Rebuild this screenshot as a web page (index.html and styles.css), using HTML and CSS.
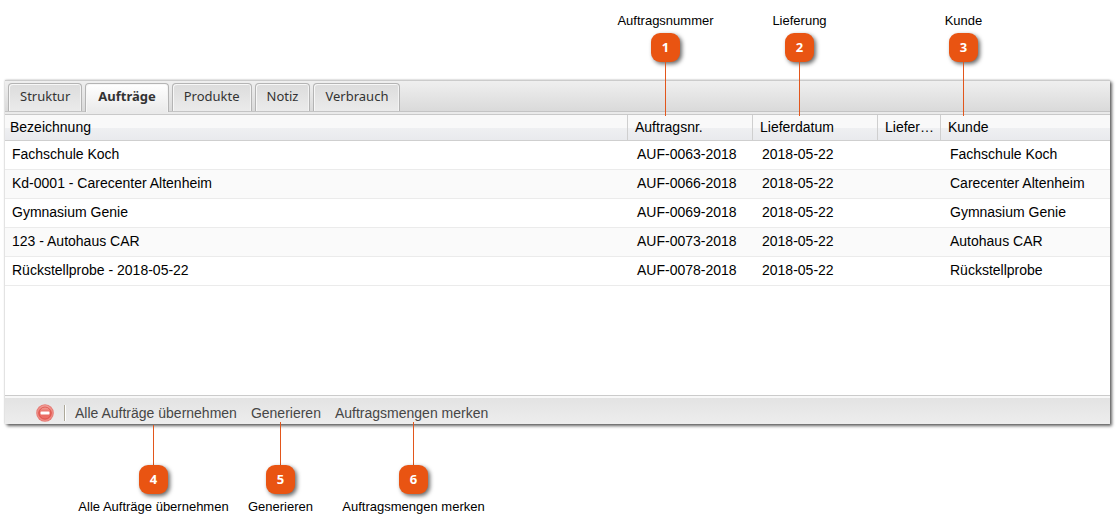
FILE: index.html
```html
<!DOCTYPE html>
<html lang="de">
<head>
<meta charset="utf-8">
<title>Aufträge</title>
<link rel="stylesheet" href="styles.css">
</head>
<body>
<main class="figure">
  <section class="panel">
    <div class="tabs" role="tablist">
      <button class="tab" role="tab" type="button">Struktur</button>
      <button class="tab tab-active" role="tab" type="button" aria-selected="true">Aufträge</button>
      <button class="tab" role="tab" type="button">Produkte</button>
      <button class="tab" role="tab" type="button">Notiz</button>
      <button class="tab" role="tab" type="button">Verbrauch</button>
    </div>
    <div class="grid">
      <table class="orders">
        <colgroup>
          <col>
          <col class="col-date">
          <col class="col-date">
          <col class="col-short">
          <col class="col-customer">
        </colgroup>
        <thead>
          <tr><th>Bezeichnung</th><th>Auftragsnr.</th><th>Lieferdatum</th><th>Liefer…</th><th>Kunde</th></tr>
        </thead>
        <tbody>
          <tr><td>Fachschule Koch</td><td>AUF-0063-2018</td><td>2018-05-22</td><td></td><td>Fachschule Koch</td></tr>
          <tr><td>Kd-0001 - Carecenter Altenheim</td><td>AUF-0066-2018</td><td>2018-05-22</td><td></td><td>Carecenter Altenheim</td></tr>
          <tr><td>Gymnasium Genie</td><td>AUF-0069-2018</td><td>2018-05-22</td><td></td><td>Gymnasium Genie</td></tr>
          <tr><td>123 - Autohaus CAR</td><td>AUF-0073-2018</td><td>2018-05-22</td><td></td><td>Autohaus CAR</td></tr>
          <tr><td>Rückstellprobe - 2018-05-22</td><td>AUF-0078-2018</td><td>2018-05-22</td><td></td><td>Rückstellprobe</td></tr>
        </tbody>
      </table>
    </div>
    <div class="toolbar">
      <button class="tool tool-remove" type="button" aria-label="Entfernen">
        <svg width="18" height="18" viewBox="0 0 18 18" aria-hidden="true">
          <defs>
            <linearGradient id="red" x1="0" y1="0" x2="0" y2="1">
              <stop offset="0" stop-color="#f6b0aa"/>
              <stop offset=".45" stop-color="#e8695f"/>
              <stop offset="1" stop-color="#f0706a"/>
            </linearGradient>
          </defs>
          <circle cx="9" cy="9" r="8.8" fill="#e77b75"/>
          <circle cx="9" cy="9" r="7.4" fill="url(#red)" stroke="#ee9791" stroke-width=".8"/>
          <circle cx="9" cy="9" r="6" fill="none" stroke="#dc554d" stroke-width=".9"/>
          <rect x="4.5" y="7.4" width="9" height="3" rx=".6" fill="#fff"/>
        </svg>
      </button>
      <span class="separator"></span>
      <button class="tool" type="button">Alle Aufträge übernehmen</button>
      <button class="tool" type="button">Generieren</button>
      <button class="tool" type="button">Auftragsmengen merken</button>
    </div>
  </section>

  <div class="callout callout-top at-number"><span class="label">Auftragsnummer</span><span class="badge">1</span><span class="line"></span></div>
  <div class="callout callout-top at-delivery"><span class="label">Lieferung</span><span class="badge">2</span><span class="line"></span></div>
  <div class="callout callout-top at-customer"><span class="label">Kunde</span><span class="badge">3</span><span class="line"></span></div>
  <div class="callout callout-bottom at-apply"><span class="line"></span><span class="badge">4</span><span class="label">Alle Aufträge übernehmen</span></div>
  <div class="callout callout-bottom at-generate"><span class="line"></span><span class="badge">5</span><span class="label">Generieren</span></div>
  <div class="callout callout-bottom at-remember"><span class="line"></span><span class="badge">6</span><span class="label">Auftragsmengen merken</span></div>
</main>
</body>
</html>
```

FILE: styles.css
```css
* {
  box-sizing: border-box;
}

body {
  margin: 0;
  background: #fff;
  color: #000;
  font: 14px/18px "Liberation Sans", Arial, sans-serif;
}

button {
  font: inherit;
  cursor: pointer;
}

.figure {
  position: relative;
  padding: 80px 9px 106px 5px;
}

.panel {
  background: #fff;
  box-shadow: 2px 2px 3px rgba(0, 0, 0, .6), 0 0 2px rgba(0, 0, 0, .25);
}

/* Tabs */
.tabs {
  display: flex;
  gap: 3px;
  height: 35px;
  padding: 2px 3px 0;
  border-top: 1px solid #cbcbcb;
  border-bottom: 1px solid #c9c9c9;
  background: linear-gradient(#efefef, #dadada 30px, #c4c4c4 30px, #c4c4c4 31px, #eaeaea 31px);
}

.tab {
  height: 28px;
  padding: 0 11px 2px;
  border: 1px solid #b4b4b4;
  border-bottom: 0;
  border-radius: 4px 4px 0 0;
  background: linear-gradient(#dcdcdc, #ebebeb);
  box-shadow: inset 1px 1px #f7f7f7, inset -1px 0 #f3f3f3;
  color: #333;
  font: 13px/25px "Noto Sans", Tahoma, sans-serif;
}

.tab-active {
  height: 29px;
  padding: 0 12px 3px;
  background: linear-gradient(#fff, #eaeaea);
  font-weight: 700;
}

/* Table */
.grid {
  min-height: 280px;
}

.orders {
  width: 100%;
  table-layout: fixed;
  border-collapse: separate;
  border-spacing: 0;
  text-align: left;
}

.col-date {
  width: 125px;
}

.col-short {
  width: 63px;
}

.col-customer {
  width: 170px;
}

.orders th {
  height: 26px;
  padding: 0 7px 2px;
  border-bottom: 1px solid #cfcfcf;
  border-left: 1px solid #cfcfcf;
  background: linear-gradient(#f9f9f9 0 50%, #eff0f2 50%, #e9eaed);
  font-weight: 400;
  white-space: nowrap;
}

.orders th:first-child {
  padding-left: 5px;
  border-left: 0;
}

.orders td {
  height: 29px;
  padding: 0 10px 2px;
  border-bottom: 1px solid #ebebeb;
  white-space: nowrap;
}

.orders td:first-child {
  padding-left: 7px;
}

.orders tbody tr:nth-child(even) {
  background: #fafafa;
}

/* Toolbar */
.toolbar {
  display: flex;
  align-items: center;
  height: 29px;
  padding: 5px 24px 0 31px;
  border-top: 1px solid #cbcbcb;
  background: linear-gradient(#f8f8f8 0 2px, #e3e3e3 2px, #ededed);
}

.tool {
  margin-right: 14px;
  padding: 0;
  border: 0;
  background: none;
  color: #464646;
  white-space: nowrap;
}

.tool-remove {
  display: flex;
  margin-right: 10px;
}

.separator {
  width: 2px;
  height: 16px;
  margin-right: 9px;
  border-left: 1px solid #aca899;
  border-right: 1px solid #fff;
}

/* Numbered callouts lying over the panel */
.callout {
  position: absolute;
  display: flex;
  flex-direction: column;
  align-items: center;
  width: 161px;
  pointer-events: none;
}

.callout-top {
  top: 13px;
}

.callout-bottom {
  bottom: 15px;
}

.at-number {
  right: 373px;
}

.at-delivery {
  right: 239px;
}

.at-customer {
  right: 75px;
}

.at-apply {
  left: 73px;
}

.at-generate {
  left: 200px;
}

.at-remember {
  left: 333px;
}

.label {
  font-size: 13px;
  line-height: 16px;
  white-space: nowrap;
}

.badge {
  width: 29px;
  height: 29px;
  border-radius: 9px;
  background: #e95412;
  box-shadow: 2px 2px 4px rgba(0, 0, 0, .6);
  color: #fff;
  font: 700 13px/28px "Open Sans", sans-serif;
  text-align: center;
}

.line {
  width: 1px;
  height: 43px;
  background: #e2561c;
}

.callout-top .badge {
  margin-top: 4px;
}

.callout-top .line {
  height: 54px;
}

.callout-bottom .badge {
  margin-bottom: 5px;
}

.at-apply .line {
  height: 40px;
}
```
